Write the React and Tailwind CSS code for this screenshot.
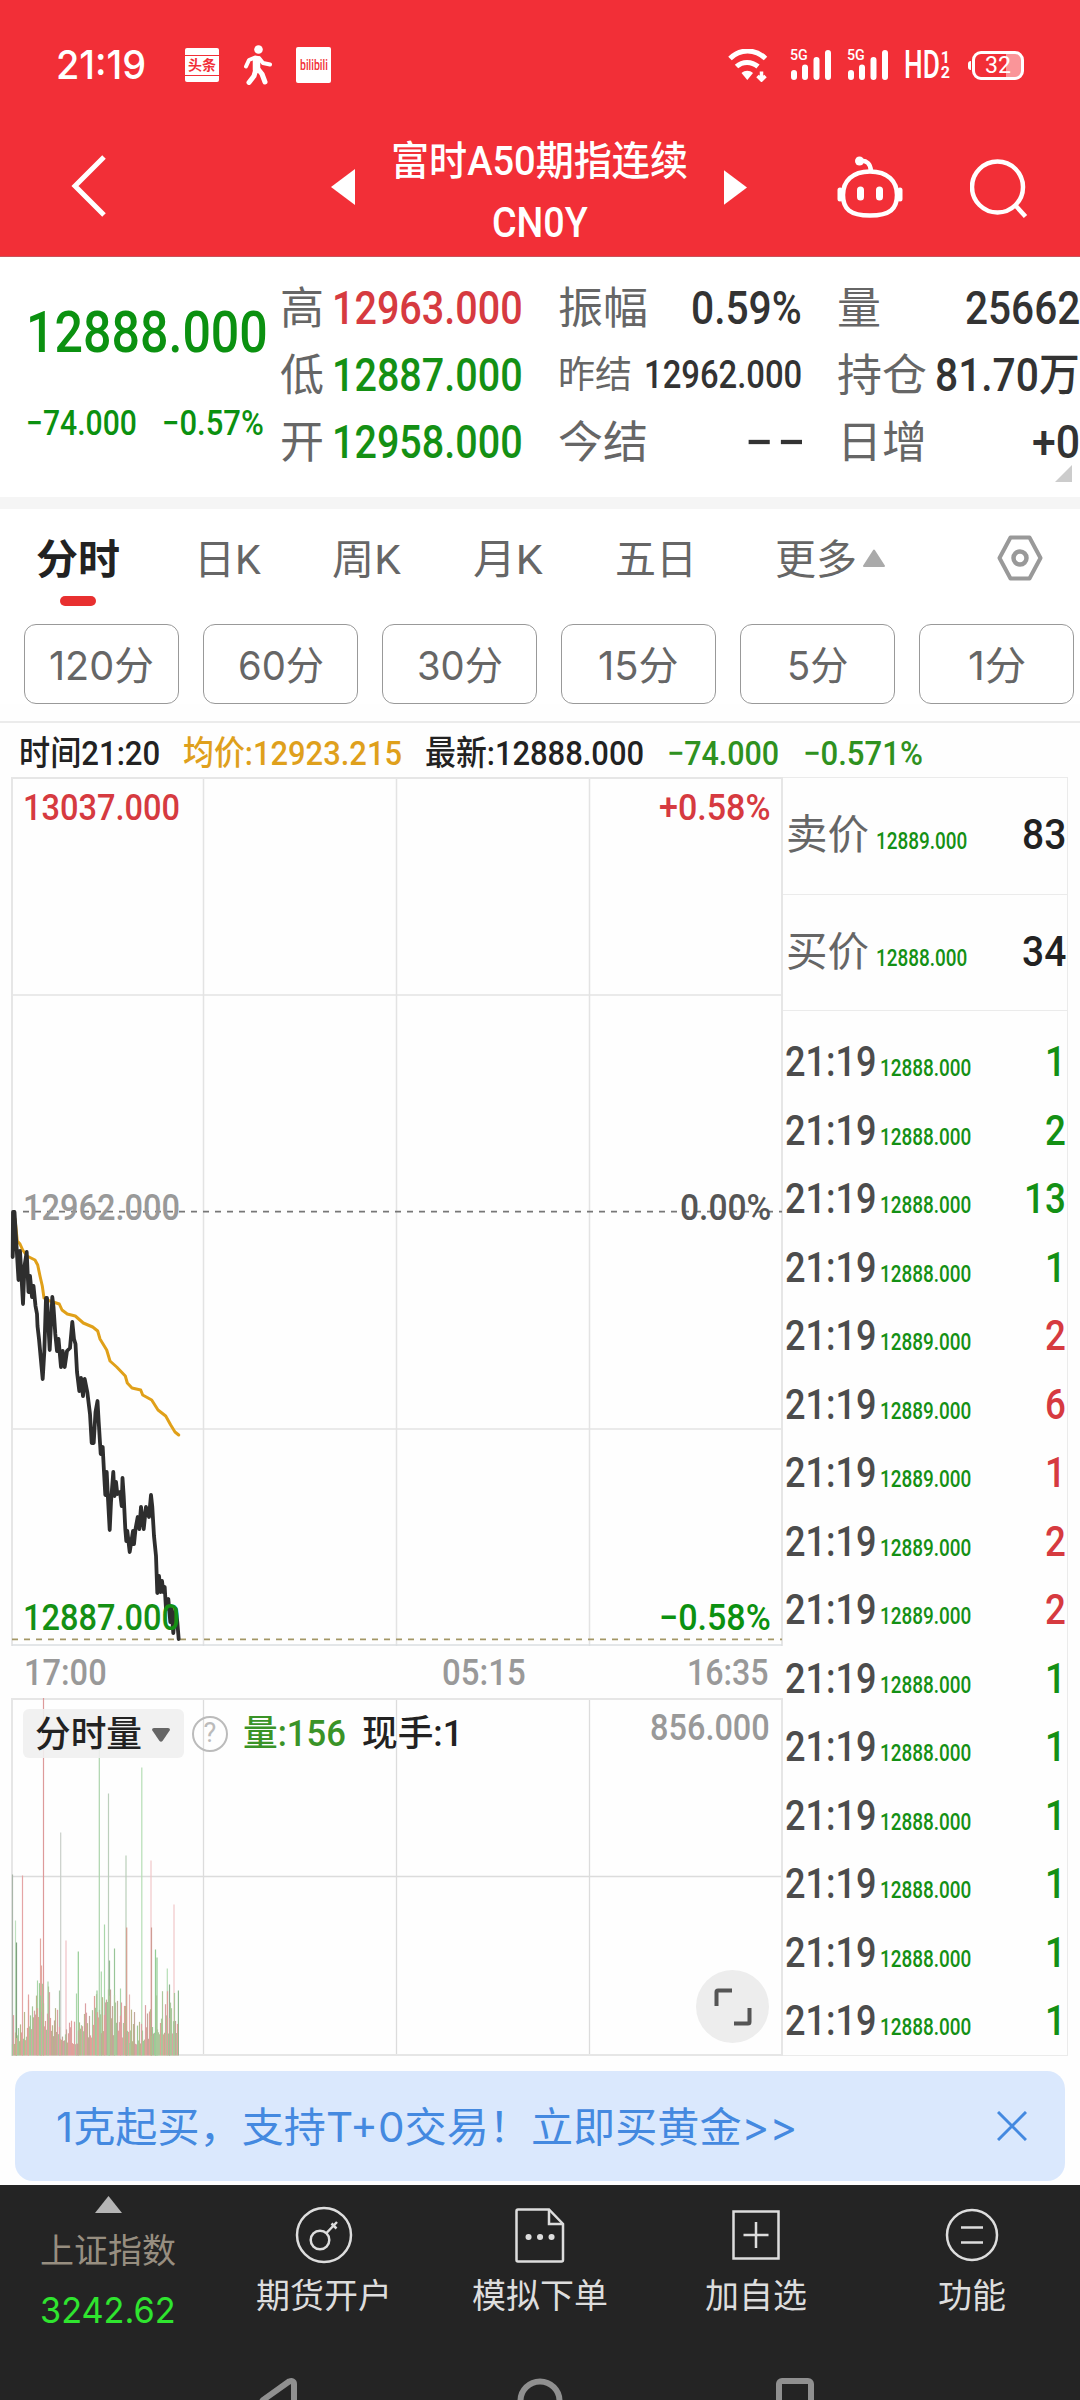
import React, { useLayoutEffect, useRef, useState } from "react";

const PRICE_LINE =
  "13,435 12.7,480 14.5,435 16.5,469 18.5,503 20,474 23,527 24.5,489 26.7,475 28.5,515 30,499 32,520 33.5,509 35.5,529 37,537 37.5,549 39,562 42.7,602 44.3,575 46,521 47,521 49.7,573 52.3,520 53.5,530 55.3,557 57,574 58.5,562 61,590 62.7,574 64.7,590 67,574 70,571 72.3,545 74,562 75.5,567 77,595 79.3,614 81,601 83,619 84.7,602 87.3,615 90,637 91.7,666 93.7,666 95.5,635 97.5,624 98.7,645 100.7,677 102.7,670 104,695 105.3,718 106.7,695 108,722 109.7,753 111,725 113.3,695 114.5,719 116,705 117.3,717 120,715 121.7,729 122.5,701 123.7,719 125.3,752 126.3,764 127.3,754 129.7,775 133,754 134,767 135.5,752 137.7,740 139.3,752 141,730 143.7,752 146,730 149,740 151,718 152.3,730 154,759 156,779 157.3,816 159,799 160.5,815 162,804 163.3,815 164.7,810 166,832 168.3,822 170.3,845 171.5,832 173.3,856 175.7,832 177.3,845 178.7,862";

const AVG_LINE =
  "15,442 17.3,464 20,467 22.7,473 27,479 35,483 37.7,488 40,499 42.3,509 44,521 50,524 59.3,527 62,533 67.3,537 75.3,539 83.3,546 92.7,550 97.7,554 100,562 106.7,573 110,584 116.7,590 125.3,599 127.3,606 132,611 140.7,613 142.7,618 151.7,623 158,633 165.7,639 170.7,648 175,655 178.7,658";

// [x, height, color]
const SPIKES = [
  [12.5, 181, "#a9b5a9"],
  [15.5, 135, "#bfe0bf"],
  [16.5, 113, "#7f9f7f"],
  [22.5, 180, "#e5a5a5"],
  [28.5, 61, "#e5a5a5"],
  [37.5, 75, "#a9d6a9"],
  [40.5, 117, "#e3a8a0"],
  [41.5, 90, "#e3a8a0"],
  [43.5, 358, "#dd9a9a"],
  [48, 74, "#a9d6a9"],
  [59.5, 65, "#a9c6a9"],
  [60.7, 223, "#c9cfc9"],
  [66, 115, "#eec0c4"],
  [76.5, 62, "#a9d6a9"],
  [78.3, 104, "#93cc93"],
  [97, 65, "#93cc93"],
  [99.3, 339, "#acd4ac"],
  [101.3, 84, "#a9d6a9"],
  [104.5, 131, "#a9d6a9"],
  [108.5, 262, "#bccfbc"],
  [109.5, 95, "#93b893"],
  [114.5, 107, "#98c598"],
  [120.5, 67, "#a9d6a9"],
  [126, 200, "#b9ceb9"],
  [126.7, 128, "#d49c8c"],
  [129.5, 61, "#e5b5b5"],
  [141.8, 288, "#b5deb5"],
  [151, 195, "#f0c6c8"],
  [151.5, 128, "#cf9c94"],
  [155.5, 106, "#93cc93"],
  [157, 98, "#93cc93"],
  [167.3, 87, "#b5deb5"],
  [169.5, 71, "#8fae8f"],
  [174, 151, "#f0c6c8"],
  [178.4, 65, "#8fb98f"],
];

const BAR_COLORS = ["#9ccb97", "#e0a09a", "#b9b78c", "#a9c89b", "#dba0a4", "#c2a79a"];

const BARS = Array.from({ length: 166 }, (_, i) => {
  const r = Math.abs(Math.sin(i * 12.9898) * 43758.5453) % 1;
  const wave = 0.55 + 0.45 * Math.cos(((i - 30) / 62) * Math.PI * 2);
  return [12.5 + i, 10 + r * r * 32 + wave * 20 * r + wave * 11, BAR_COLORS[(i * 7 + Math.floor(r * 10)) % 6]];
});

const TABS = [
  ["日K", "w-[67px]", "ml-[74px]"],
  ["周K", "w-[69px]", "ml-[71px]"],
  ["月K", "w-[70px]", "ml-[72px]"],
  ["五日", "w-[82px]", "ml-[72px]"],
  ["更多", "w-[82px]", "ml-[78px]"],
];

const PERIODS = [
  ["120分", "w-[105px]"],
  ["60分", "w-[86px]"],
  ["30分", "w-[86px]"],
  ["15分", "w-[81px]"],
  ["5分", "w-[61px]"],
  ["1分", "w-[58px]"],
];

const TICKS = [
  ["12888.000", "1", 0],
  ["12888.000", "2", 0],
  ["12888.000", "13", 0],
  ["12888.000", "1", 0],
  ["12889.000", "2", 1],
  ["12889.000", "6", 1],
  ["12889.000", "1", 1],
  ["12889.000", "2", 1],
  ["12889.000", "2", 1],
  ["12888.000", "1", 0],
  ["12888.000", "1", 0],
  ["12888.000", "1", 0],
  ["12888.000", "1", 0],
  ["12888.000", "1", 0],
  ["12888.000", "1", 0],
];

// Squeezes a line of text horizontally into the width of its box
function Fit({ className = "", children }) {
  const box = useRef(null);
  const text = useRef(null);
  const [scale, setScale] = useState(1);

  useLayoutEffect(() => {
    setScale(box.current.clientWidth / text.current.offsetWidth);
  }, [children]);

  return (
    <span ref={box} className={`inline-flex shrink-0 leading-none whitespace-nowrap ${className}`}>
      <span
        ref={text}
        className="inline-block shrink-0 origin-left"
        style={{ transform: `scaleX(${scale})` }}
      >
        {children}
      </span>
    </span>
  );
}

function Signal() {
  return (
    <div className="relative h-[32px] w-[42px]">
      <Fit className="absolute -top-px left-0 w-[18px] text-[15px] font-medium">5G</Fit>
      <svg viewBox="0 0 42 32" className="h-full w-full" stroke="#fff" strokeWidth="6" strokeLinecap="round">
        <path d="M4 24v4M15 18.500v9.500M26.500 11v17M38 4v24" />
      </svg>
    </div>
  );
}

function StatusBar() {
  return (
    <div className="flex h-[130px] items-center justify-between pr-[56px] pl-[56px]">
      <div className="flex items-center">
        <Fit className="w-[90px] font-[Inter] text-[40px] font-medium">21:19</Fit>
        <div className="ml-[39px] flex h-[34px] w-[34px] items-center justify-center rounded-xs bg-white">
          <div className="flex h-[21px] w-full items-center justify-center border-y border-[#f22f37] text-[14px] leading-none font-bold text-[#f22f37]">
            头条
          </div>
        </div>
        <svg viewBox="0 0 28 40" className="ml-[25px] h-[40px] w-[28px]" fill="none" stroke="#fff" strokeLinecap="round" strokeLinejoin="round">
          <circle cx="14.500" cy="4.500" r="4.300" fill="#fff" stroke="none" />
          <path d="M12.500 14.500v10" strokeWidth="7.500" />
          <path d="M11 12.500l-6 2.500-3 6.500M15 13l4 5 7 1.500" strokeWidth="4" />
          <path d="M12 24l-2 7-5 6.500M14 24l4 5 3 8" strokeWidth="5" />
        </svg>
        <div className="ml-[24px] flex h-[36px] w-[35px] items-center justify-center rounded-xs bg-white">
          <Fit className="w-[28px] text-[15px] font-medium text-[#f22f37]">bilibili</Fit>
        </div>
      </div>
      <div className="flex items-center">
        <svg viewBox="0 0 40 33" className="h-[33px] w-[40px]" fill="none" stroke="#fff">
          <path d="M2 9.500C12-.500 27-.500 37.500 9.500" strokeWidth="5" />
          <path d="M8.500 17.500c6-5.500 15-5.500 21.500 0" strokeWidth="5" />
          <path d="M13.500 24c3.500-3 8-3 11.500 0l-5.700 7z" fill="#fff" stroke="none" />
          <path d="M33.500 22.500v7M29.500 27l4 4 4-4" strokeWidth="3.500" />
        </svg>
        <div className="ml-[22px] flex gap-[15px]">
          <Signal />
          <Signal />
        </div>
        <Fit className="ml-[15px] w-[36px] text-[38px] font-medium">HD</Fit>
        <div className="ml-px flex flex-col text-[16px] leading-[15px] font-bold">
          <span>1</span>
          <span>2</span>
        </div>
        <div className="ml-[18px] flex items-center">
          <div className="mr-px h-[9px] w-[3px] rounded-l-sm bg-white" />
          <div className="flex h-[29px] w-[52px] items-center justify-center rounded-[9px] border-[3px] border-white bg-linear-to-r from-transparent from-68% to-[#fa9599] to-68%">
            <Fit className="w-[26px] text-[24px]">32</Fit>
          </div>
        </div>
      </div>
    </div>
  );
}

function Header() {
  return (
    <header className="h-[257px] border-b border-[#c9525a] bg-[#f22f37] text-white">
      <StatusBar />
      <div className="flex h-[122px] items-center pl-[70px]">
        <svg viewBox="0 0 36 62" className="mb-2.5 h-[62px] w-[36px]" fill="none" stroke="#fff" strokeWidth="5">
          <path d="M34 2L5 31l29 29" />
        </svg>
        <svg viewBox="0 0 24 36" className="mb-2 ml-[225px] h-[36px] w-[24px]" fill="#fff">
          <path d="M24 0v36L0 18z" />
        </svg>
        <div className="ml-[36px] flex w-[297px] flex-col items-center pt-[3px]">
          <div className="flex h-[60px] items-center">
            <Fit className="w-[297px] text-[40px] font-medium">富时A50期指连续</Fit>
          </div>
          <div className="flex h-[61px] items-center">
            <Fit className="w-[96px] text-[42px] font-medium">CN0Y</Fit>
          </div>
        </div>
        <svg viewBox="0 0 24 36" className="mb-2 ml-[36px] h-[35px] w-[23px]" fill="#fff">
          <path d="M0 0v36l24-18z" />
        </svg>
        <svg viewBox="0 0 66 62" className="mb-2 ml-[90px] h-[62px] w-[66px]" fill="none" stroke="#fff" strokeWidth="4.500">
          <path d="M23 5c7-1 10.500 3 11 10" strokeLinecap="round" />
          <circle cx="22.500" cy="5" r="4.500" fill="#fff" stroke="none" />
          <path d="M33 15.500c18 0 27 10 27 23.500 0 14-7 20.500-27 20.500S6 53 6 39C6 25.500 15 15.500 33 15.500z" />
          <path d="M3 34v9M63 34v9" strokeWidth="5" strokeLinecap="round" />
          <path d="M23.500 34v7M42.500 34v7" strokeWidth="7" strokeLinecap="round" />
        </svg>
        <svg viewBox="0 0 58 60" className="mb-1.5 ml-[67px] h-[60px] w-[58px]" fill="none" stroke="#fff" strokeWidth="4.500">
          <circle cx="27.500" cy="29" r="25.500" />
          <path d="M45.500 47.500L55.500 58.500" />
        </svg>
      </div>
    </header>
  );
}

function Stat({ label, labelClass, value, valueClass }) {
  return (
    <div className="flex h-[67px] items-center justify-between">
      <Fit className={`text-[#666] ${labelClass}`}>{label}</Fit>
      <Fit className={`font-medium ${valueClass}`}>{value}</Fit>
    </div>
  );
}

function Quote() {
  return (
    <section className="relative flex h-[240px] bg-white pt-[18px]">
      <div className="w-[280px] pt-[28px] pl-[26px] text-[#0b9110]">
        <Fit className="w-[242px] text-[58px] font-medium">12888.000</Fit>
        <div className="mt-[45px] flex gap-[25px]">
          <Fit className="w-[111px] text-[35px] font-medium">−74.000</Fit>
          <Fit className="w-[102px] text-[35px] font-medium">−0.57%</Fit>
        </div>
      </div>
      <div className="w-[243px]">
        <Stat label="高" labelClass="w-[44px] text-[44px]" value="12963.000" valueClass="w-[191px] text-[45.500px] text-[#d63a40]" />
        <Stat label="低" labelClass="w-[44px] text-[44px]" value="12887.000" valueClass="w-[191px] text-[45.500px] text-[#149014]" />
        <Stat label="开" labelClass="w-[44px] text-[44px]" value="12958.000" valueClass="w-[191px] text-[45.500px] text-[#149014]" />
      </div>
      <div className="ml-[35px] w-[244px] text-[#333]">
        <Stat label="振幅" labelClass="w-[90px] text-[44px]" value="0.59%" valueClass="w-[111px] text-[45.500px]" />
        <Stat label="昨结" labelClass="w-[74px] text-[37px]" value="12962.000" valueClass="w-[158px] text-[39px]" />
        <Stat label="今结" labelClass="w-[90px] text-[44px]" value="− −" valueClass="w-[57px] text-[45.500px] tracking-[-4px]" />
      </div>
      <div className="ml-[35px] w-[243px] text-[#333]">
        <Stat label="量" labelClass="w-[44px] text-[44px]" value="25662" valueClass="w-[115px] text-[45.500px]" />
        <Stat label="持仓" labelClass="w-[90px] text-[44px]" value="81.70万" valueClass="w-[145px] text-[45.500px]" />
        <Stat label="日增" labelClass="w-[90px] text-[44px]" value="+0" valueClass="w-[48px] text-[45.500px]" />
      </div>
      <svg viewBox="0 0 17 17" className="absolute right-[8px] bottom-[15px] h-[17px] w-[17px]" fill="#ccc">
        <path d="M17 0v17H0z" />
      </svg>
    </section>
  );
}

function Tabs() {
  return (
    <section className="bg-white">
      <div className="flex h-[100px] items-center pt-[3px] pl-[36px] text-[41px] text-[#666]">
        <div className="relative flex">
          <Fit className="w-[84px] font-bold text-[#222]">分时</Fit>
          <div className="absolute -bottom-[25px] left-[24px] h-[10px] w-[36px] rounded-full bg-[#e83030]" />
        </div>
        {TABS.map(([label, width, margin]) => (
          <Fit key={label} className={`${width} ${margin}`}>
            {label}
          </Fit>
        ))}
        <svg viewBox="0 0 22 18" className="mb-1.5 ml-[6px] h-[18px] w-[22px]" fill="#aaa" stroke="#aaa" strokeWidth="2" strokeLinejoin="round">
          <path d="M11 1.500l10 15.500H1z" />
        </svg>
        <svg viewBox="0 0 46 46" className="mb-1.5 ml-[112px] h-[46px] w-[46px]" fill="none" stroke="#999" strokeWidth="4" strokeLinejoin="round">
          <path d="M13.500 2.500h19L43.500 23l-11 20.500h-19L2.500 23z" />
          <circle cx="23" cy="23" r="6.500" strokeWidth="4.500" />
        </svg>
      </div>
      <div className="mt-[15px] flex gap-[24px] pl-[24px]">
        {PERIODS.map(([label, width]) => (
          <div
            key={label}
            className="flex h-[80px] w-[155px] items-center justify-center rounded-xl border border-[#999] pt-1 text-[#666]"
          >
            <Fit className={`${width} font-[Inter,'Noto_Sans_CJK_SC',sans-serif] text-[40px]`}>{label}</Fit>
          </div>
        ))}
      </div>
    </section>
  );
}

function InfoRow() {
  return (
    <div className="mt-[17px] flex h-[56px] items-center border-t-2 border-[#ebebeb] pt-[5px] pl-[19px] text-[34px] font-medium text-[#222]">
      <Fit className="w-[141px]">时间21:20</Fit>
      <Fit className="ml-[23px] w-[219px] text-[#dfa01c]">均价:12923.215</Fit>
      <Fit className="ml-[23px] w-[219px]">最新:12888.000</Fit>
      <Fit className="ml-[23px] w-[112px] text-[#2f9120]">−74.000</Fit>
      <Fit className="ml-[24px] w-[120px] text-[#2f9120]">−0.571%</Fit>
    </div>
  );
}

function PriceChart() {
  return (
    <div className="relative h-[869px] text-[36.500px] font-medium">
      <svg viewBox="0 0 783 869" className="h-full w-full" fill="none">
        <path d="M203.500 0v869M396.500 0v869M589.500 0v869M12 218h770M12 652h770" stroke="#e3e3e3" strokeWidth="1.500" />
        <path d="M12 869V1H782v868" stroke="#e6e6e6" strokeWidth="2" />
        <path d="M12 868h770" stroke="#dadee0" strokeWidth="1.500" />
        <path d="M23 434.700h759" stroke="#777" strokeWidth="1.800" strokeDasharray="6 6" />
        <path d="M12 862.300h770" stroke="#a39766" strokeWidth="1.800" strokeDasharray="6 6" />
        <polyline points={AVG_LINE} stroke="#e0a019" strokeWidth="3" strokeLinejoin="round" strokeLinecap="round" />
        <polyline points={PRICE_LINE} stroke="#2e2e2e" strokeWidth="3.800" strokeLinejoin="round" strokeLinecap="round" />
      </svg>
      <Fit className="absolute top-[13px] left-[23px] w-[157px] text-[#d63a40]">13037.000</Fit>
      <Fit className="absolute top-[13px] right-[12px] w-[112px] text-[#d63a40]">+0.58%</Fit>
      <Fit className="absolute top-[413px] left-[23px] w-[157px] text-[#999]">12962.000</Fit>
      <Fit className="absolute top-[413px] right-[12px] w-[91px] text-[#555]">0.00%</Fit>
      <Fit className="absolute top-[823px] left-[23px] w-[157px] text-[#149014]">12887.000</Fit>
      <Fit className="absolute top-[823px] right-[12px] w-[112px] text-[#0b9110]">−0.58%</Fit>
    </div>
  );
}

function VolumeChart() {
  return (
    <div className="relative h-[358px] text-[36px] font-medium">
      <svg viewBox="0 0 783 358" className="h-full w-full" fill="none">
        <path d="M203.500 0v357M396.500 0v357M589.500 0v357M12 178.500h770" stroke="#dcdcdc" strokeWidth="1.300" />
        <path d="M12 357V1H782v356z" stroke="#e6e6e6" strokeWidth="2" />
        {SPIKES.map(([x, h, color]) => (
          <path key={x} d={`M${x} 357.500v-${h}`} stroke={color} strokeWidth="1.200" />
        ))}
        {BARS.map(([x, h, color]) => (
          <path key={x} d={`M${x} 357.500v-${h}`} stroke={color} strokeWidth="1.200" />
        ))}
      </svg>
      <div className="absolute top-[11px] left-[23px] flex h-[49px] items-center text-[#222]">
        <div className="flex h-full w-[161px] items-center rounded-md bg-[#efefef]/90 pt-0.5 pl-[12px]">
          <Fit className="w-[107px]">分时量</Fit>
          <svg viewBox="0 0 18 14" className="ml-[10px] h-[14px] w-[18px]" fill="#666">
            <path d="M0 2q0-2 2-2h14q2 0 2 2L10.500 13q-1.500 1.500-3 0z" />
          </svg>
        </div>
        <div className="ml-[8px] flex h-[36px] w-[36px] items-center justify-center rounded-full border-2 border-[#bbb] text-[27px] leading-none font-normal text-[#bbb]">
          ?
        </div>
        <Fit className="ml-[15px] w-[103px] text-[#3a9327]">量:156</Fit>
        <Fit className="ml-[16px] w-[101px]">现手:1</Fit>
      </div>
      <Fit className="absolute top-[12px] right-[13px] w-[120px] text-[#999]">856.000</Fit>
      <div className="absolute right-[14px] bottom-[13px] flex h-[73px] w-[73px] items-center justify-center rounded-full bg-[#ededed]">
        <svg viewBox="0 0 38 38" className="h-[38px] w-[38px]" fill="none" stroke="#555" strokeWidth="4">
          <path d="M2.500 18V4q0-1.500 1.500-1.500h14M35.500 20v14q0 1.500-1.500 1.500H20" />
        </svg>
      </div>
    </div>
  );
}

function OrderPanel() {
  return (
    <div className="w-[285px] border-t border-r border-b border-[#ebebeb] font-medium">
      {[
        ["卖价", "12889.000", "83"],
        ["买价", "12888.000", "34"],
      ].map(([label, price, qty]) => (
        <div key={label} className="flex h-[116.500px] items-baseline border-b border-[#ebebeb] pt-[36px] pl-[3px]">
          <Fit className="w-[83px] text-[41px] font-normal text-[#666]">{label}</Fit>
          <Fit className="ml-[7px] w-[91px] text-[23.500px] text-[#149014]">{price}</Fit>
          <Fit className="ml-[55px] w-[44px] text-[42.500px] text-[#222]">{qty}</Fit>
        </div>
      ))}
      <div className="pt-[17px] pl-[2px]">
        {TICKS.map(([price, qty, up], i) => (
          <div key={i} className="flex h-[68.500px] items-baseline pt-[13px]">
            <Fit className="w-[92px] text-[42px] text-[#4c4c4c]">21:19</Fit>
            <Fit className="ml-[3px] w-[91px] text-[23.500px] text-[#149014]">{price}</Fit>
            <div
              className={`flex flex-1 justify-end pr-px text-[42px] leading-none ${up ? "text-[#d63a40]" : "text-[#149014]"}`}
            >
              <Fit className={qty.length > 1 ? "w-[42px]" : "w-[21px]"}>{qty}</Fit>
            </div>
          </div>
        ))}
      </div>
    </div>
  );
}

function Banner() {
  return (
    <div className="mt-[15px] mr-[15px] mb-[4px] ml-[15px] flex h-[110px] items-center rounded-[18px] bg-[#dae8fd] pr-[38px] pl-[41px] text-[#4489e0]">
      <Fit className="w-[741px] pt-[3px] font-[Inter,'Noto_Sans_CJK_SC',sans-serif] text-[41px]">
        1克起买，支持T+0交易！立即买黄金&gt;&gt;
      </Fit>
      <svg viewBox="0 0 30 30" className="ml-auto h-[30px] w-[30px]" stroke="#4489e0" strokeWidth="3">
        <path d="M1 1l28 28M29 1L1 29" />
      </svg>
    </div>
  );
}

function BottomItem({ label, width, children }) {
  return (
    <div className="flex flex-1 flex-col items-center pt-[20px]">
      <svg viewBox="0 0 60 60" className="h-[60px] w-[60px]" fill="none" stroke="#ddd" strokeWidth="2.500">
        {children}
      </svg>
      <Fit className={`mt-[14px] text-[34px] text-[#ddd] ${width}`}>{label}</Fit>
    </div>
  );
}

function BottomBar() {
  return (
    <footer className="h-[215px] overflow-hidden bg-[#242424]">
      <div className="flex h-[155px]">
        <div className="flex flex-1 flex-col items-center pt-[11px]">
          <svg viewBox="0 0 27 17" className="h-[17px] w-[27px]" fill="#b5b5b5">
            <path d="M13.500 0L27 17H0z" />
          </svg>
          <Fit className="mt-[21px] w-[136px] text-[34px] text-[#978e80]">上证指数</Fit>
          <Fit className="mt-[24px] w-[136px] font-[Inter] text-[36px] text-[#2fe52f]">3242.62</Fit>
        </div>
        <BottomItem label="期货开户" width="w-[136px]">
          <circle cx="30" cy="30" r="27" />
          <circle cx="26" cy="35" r="9.300" />
          <path d="M32.500 28L43 17M37.500 18.500l5 5" />
        </BottomItem>
        <BottomItem label="模拟下单" width="w-[136px]">
          <path d="M39 4.500H8q-1.500 0-1.500 1.500v49q0 1.500 1.500 1.500h43.500q1.500 0 1.500-1.500V19z" />
          <path d="M39 4.500V19h14" />
          <path d="M18.500 32h.1M30 32h.1M41.500 32h.1" strokeWidth="6" strokeLinecap="round" />
        </BottomItem>
        <BottomItem label="加自选" width="w-[102px]">
          <path d="M7.500 6.500h45v47h-45zM30 17v26M17.500 30h25" />
        </BottomItem>
        <BottomItem label="功能" width="w-[68px]">
          <circle cx="30" cy="30" r="25" />
          <path d="M19 22.500h22M19 37.500h22" />
        </BottomItem>
      </div>
      <svg viewBox="0 0 1080 60" className="h-[60px] w-[1080px]" fill="none" stroke="#909090" strokeWidth="6">
        <path d="M294 66V44q0-4-5-2.500L263 60l-4 6" />
        <circle cx="540" cy="61" r="19.500" />
        <rect x="779" y="41" width="32" height="34" rx="3" />
      </svg>
    </footer>
  );
}

export default function App() {
  return (
    <div className="h-[2400px] w-[1080px] overflow-hidden bg-[#fefefe] font-[Roboto,'Noto_Sans_CJK_SC',sans-serif]">
      <Header />
      <Quote />
      <div className="h-[12px] bg-[#f5f5f5]" />
      <Tabs />
      <InfoRow />
      <div className="flex h-[1279px]">
        <div className="w-[783px]">
          <PriceChart />
          <div className="flex h-[52px] items-center pt-[3px] pr-[14px] pl-[24px] text-[36.500px] font-medium text-[#999]">
            <Fit className="w-[83px]">17:00</Fit>
            <Fit className="ml-[335px] w-[84px]">05:15</Fit>
            <Fit className="ml-auto w-[82px]">16:35</Fit>
          </div>
          <VolumeChart />
        </div>
        <OrderPanel />
      </div>
      <Banner />
      <BottomBar />
    </div>
  );
}
